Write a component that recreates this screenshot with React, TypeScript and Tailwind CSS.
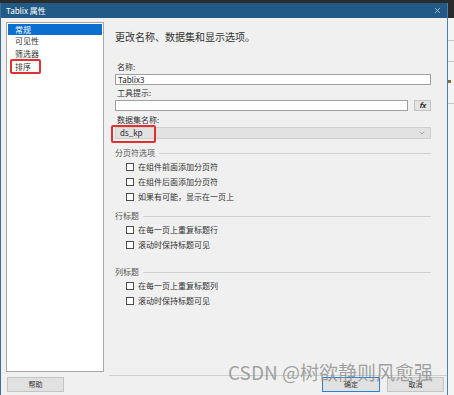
import { X, ChevronDown } from 'lucide-react'

const font = { fontFamily: '"Noto Sans CJK SC", "Liberation Sans", sans-serif' }

function Check({ label }: { label: string }) {
  return (
    <div className="flex items-center gap-[4px] h-[14px] pl-[11px]">
      <span className="w-[8px] h-[8px] border border-[#4d4d4d] bg-white" />
      <span className="text-[8px] leading-none text-[#333]">{label}</span>
    </div>
  )
}

function Group({ title }: { title: string }) {
  return (
    <div className="flex items-center gap-[4px] h-[12px]">
      <span className="text-[8px] leading-none text-[#555]">{title}</span>
      <span className="flex-1 h-px bg-[#d0d0d0]" />
    </div>
  )
}

export default function App() {
  const items = ['常规', '可见性', '筛选器', '排序']

  return (
    <div className="w-[454px] h-[395px] overflow-hidden bg-[#2b2b2b] relative" style={font}>
      <div className="h-[3px]" />
      <div className="flex h-[392px]">
        {/* 主窗口 */}
        <div className="w-[447px] flex flex-col border-l border-[#3d6f9c] bg-[#f0f0f0]">
          <div className="h-[15px] bg-[#215a86] flex items-center justify-between px-[5px]">
            <span className="text-[8px] leading-none text-white">Tablix 属性</span>
            <X className="w-[9px] h-[9px] text-[#c8d6e3]" strokeWidth={2} />
          </div>

          <div className="flex flex-1 pt-[4px]">
            {/* 左侧列表 */}
            <div className="ml-[5px] w-[98px] h-[350px] bg-white border border-[#a8a8a8] pt-[1px]">
              {items.map((it, i) => (
                <div
                  key={it}
                  className={`relative mx-px flex items-center pl-[7px] text-[8px] leading-none ${
                    i === 0 ? 'bg-[#0a6fcf] text-white h-[11px]' : 'text-[#333] h-[13px] pb-[1px]'
                  }`}
                >
                  {it}
                  {i === 3 && (
                    <span className="absolute left-[2px] top-[-2px] w-[31px] h-[15px] border-2 border-[#e03030] rounded-[2px]" />
                  )}
                </div>
              ))}
            </div>

            {/* 右侧内容 */}
            <div className="ml-[11px] w-[316px] flex flex-col">
              <div className="mt-[10px] text-[10px] leading-none text-[#333]">更改名称、数据集和显示选项。</div>

              <div className="mt-[21px] pl-[2px] text-[8px] leading-none text-[#333]">名称:</div>
              <div className="mt-[3px] h-[11px] bg-white border border-[#a0a0a0] flex items-center px-[2px] text-[8px] leading-none text-[#222]">
                Tablix3
              </div>

              <div className="mt-[4px] pl-[2px] text-[8px] leading-none text-[#333]">工具提示:</div>
              <div className="mt-[3px] flex gap-[6px]">
                <div className="w-[293px] h-[11px] bg-white border border-[#a0a0a0]" />
                <div className="w-[17px] h-[11px] border border-[#c4c4c4] bg-[#e4e4e4] flex items-center justify-center text-[7px] font-bold italic leading-none text-[#222]">
                  fx
                </div>
              </div>

              <div className="mt-[5px] pl-[2px] text-[8px] leading-none text-[#333]">数据集名称:</div>
              <div className="relative mt-[3px] h-[12px] bg-[#e2e2e2] border border-[#cfcfcf] flex items-center justify-between px-[4px]">
                <span className="text-[8px] leading-none text-[#222]">ds_kp</span>
                <ChevronDown className="w-[8px] h-[8px] text-[#888]" />
                <span className="absolute -left-[5px] -top-[3px] w-[45px] h-[18px] border-2 border-[#e03030] rounded-[2px]" />
              </div>

              <div className="mt-[8px]">
                <Group title="分页符选项" />
              </div>
              <div className="mt-[1px] flex flex-col gap-px">
                <Check label="在组件前面添加分页符" />
                <Check label="在组件后面添加分页符" />
                <Check label="如果有可能，显示在一页上" />
              </div>

              <div className="mt-[6px]">
                <Group title="行标题" />
              </div>
              <div className="mt-[1px] flex flex-col gap-px">
                <Check label="在每一页上重复标题行" />
                <Check label="滚动时保持标题可见" />
              </div>

              <div className="mt-[14px]">
                <Group title="列标题" />
              </div>
              <div className="mt-[1px] flex flex-col gap-px">
                <Check label="在每一页上重复标题列" />
                <Check label="滚动时保持标题可见" />
              </div>
            </div>
          </div>

          {/* 底部按钮 */}
          <div className="flex items-end h-[20px] pb-[3px] relative">
            <span className="absolute left-[108px] right-0 top-0 h-px bg-[#cfcfcf]" />
            <div className="ml-[6px] w-[57px] h-[15px] bg-[#e1e1e1] border border-[#c4c4c4] flex items-center justify-center text-[7px] leading-none text-[#333]">
              帮助
            </div>
            <div className="ml-auto w-[58px] h-[15px] bg-[#e1e1e1] border border-[#2a7fd6] flex items-center justify-center text-[7px] leading-none text-[#333]">
              确定
            </div>
            <div className="ml-[7px] mr-[3px] w-[57px] h-[15px] bg-[#e1e1e1] border border-[#c4c4c4] flex items-center justify-center text-[7px] leading-none text-[#333]">
              取消
            </div>
          </div>
        </div>

        {/* 右侧边缘 */}
        <div className="flex-1 bg-[#f4f4f4] border-l border-[#4a7fae] flex flex-col">
          <div className="h-[15px] bg-[#2b2b2b]" />
          <div className="mt-[22px] h-px bg-[#c8c8c8]" />
          <div className="mt-[20px] h-px bg-[#c8c8c8]" />
          <div className="mt-[18px] h-[3px] w-[3px] bg-[#8a6a3a]" />
          <div className="mt-[20px] h-px bg-[#c8c8c8]" />
        </div>
      </div>

      {/* 水印 */}
      <div className="absolute left-[228px] top-[362px] text-[19px] leading-none text-[#8c8c8c]/80 whitespace-nowrap">
        CSDN @树欲静则风愈强
      </div>
    </div>
  )
}
